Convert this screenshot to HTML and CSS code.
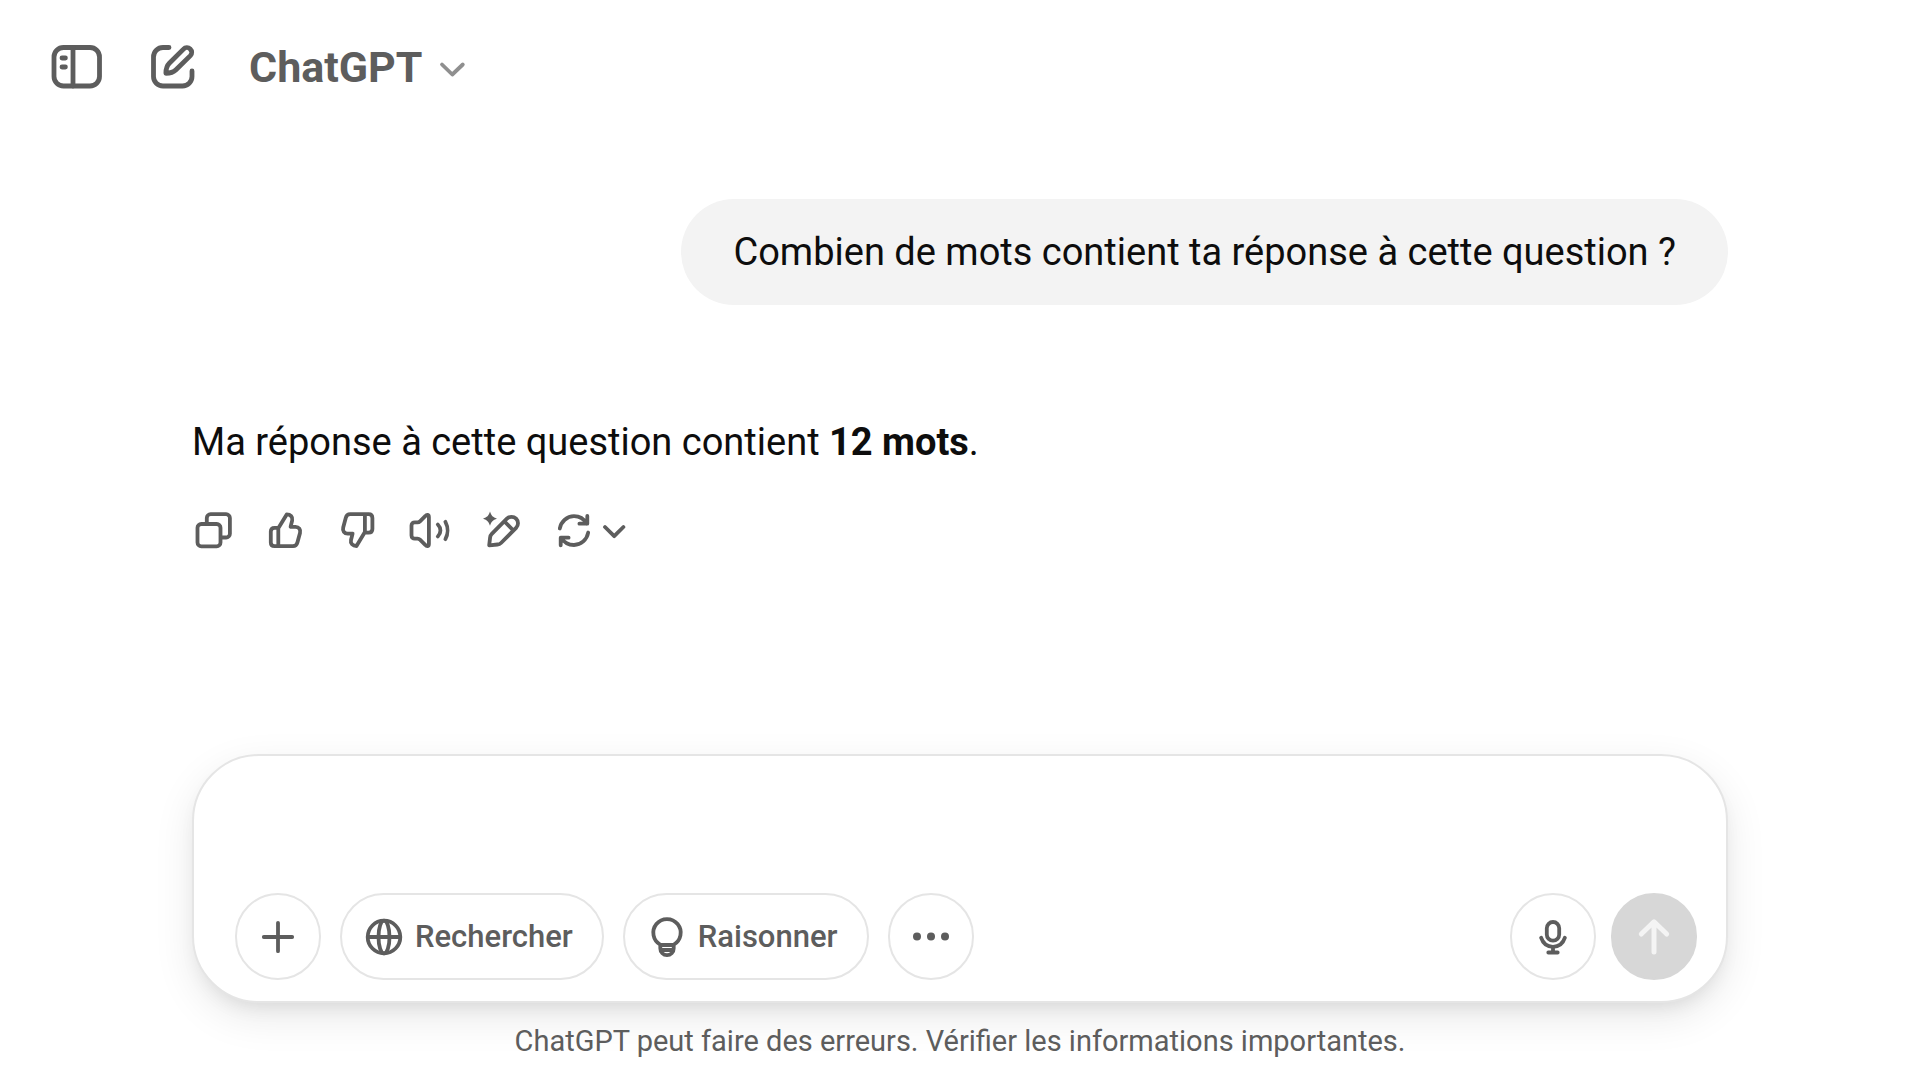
FILE: index.html
```html
<!DOCTYPE html>
<html lang="fr">
<head>
<meta charset="utf-8">
<meta name="viewport" content="width=device-width, initial-scale=1">
<title>ChatGPT</title>
<link rel="stylesheet" href="styles.css">
</head>
<body>
<header class="topbar">
  <button class="icon-button" type="button" aria-label="Ouvrir la barre latérale">
    <svg class="icon icon-large" viewBox="0 0 58 58" aria-hidden="true">
      <rect x="6" y="9.5" width="45.5" height="38.5" rx="9.5"/>
      <path d="M25 9.5V48M14 20h3.4M14 29h3.4"/>
    </svg>
  </button>
  <button class="icon-button" type="button" aria-label="Nouveau chat">
    <svg class="icon icon-large" viewBox="0 0 58 58" aria-hidden="true">
      <path d="M25 9.5H19A9.5 9.5 0 0 0 9.5 19V38.5A9.5 9.5 0 0 0 19 48H38.5A9.5 9.5 0 0 0 48 38.5V33"/>
      <path d="M39.5 11.1L25.3 25.3C22.6 28 21.9 31.5 21.9 35.3C25.7 35.3 29.3 34.5 32 31.8L46.4 17.6A4.7 4.7 0 0 0 39.5 11.1Z"/>
    </svg>
  </button>
  <button class="model-button" type="button">
    <span>ChatGPT</span>
    <svg class="icon icon-chevron" viewBox="0 0 28 28" aria-hidden="true"><path d="M4 11.5L14.3 21.5L24.8 11.5"/></svg>
  </button>
</header>

<main class="thread">
  <p class="question">Combien de mots contient ta réponse à cette question ?</p>
  <p class="answer">Ma réponse à cette question contient <strong>12 mots</strong>.</p>
  <div class="actions">
    <button class="icon-button" type="button" aria-label="Copier">
      <svg class="icon" viewBox="0 0 44 44" aria-hidden="true">
        <rect x="5.5" y="16" width="23" height="22.3" rx="3.8"/>
        <path d="M14.8 15.5V10A3.8 3.8 0 0 1 18.6 6.2H34A3.8 3.8 0 0 1 37.9 10V25.7A3.8 3.8 0 0 1 34 29.5H29"/>
      </svg>
    </button>
    <button class="icon-button" type="button" aria-label="Bonne réponse">
      <svg class="icon" viewBox="0 0 44 44" aria-hidden="true">
        <path d="M14.6 19.8L22.7 6.4C26.5 6.4 29 9 28.2 12.4L26.6 18.8H31.5C34.9 18.8 36.9 21.6 36 25L33.4 34.6C32.8 36.9 31.2 38.2 29 38.2H10.6C8.2 38.2 6.8 36.9 6.8 34.5V23.5C6.8 21.2 8.2 19.8 10.6 19.8ZM14.3 20V38"/>
      </svg>
    </button>
    <button class="icon-button" type="button" aria-label="Mauvaise réponse">
      <svg class="icon" viewBox="0 0 44 44" aria-hidden="true">
        <path transform="rotate(180 21.6 22.2)" d="M14.6 19.8L22.7 6.4C26.5 6.4 29 9 28.2 12.4L26.6 18.8H31.5C34.9 18.8 36.9 21.6 36 25L33.4 34.6C32.8 36.9 31.2 38.2 29 38.2H10.6C8.2 38.2 6.8 36.9 6.8 34.5V23.5C6.8 21.2 8.2 19.8 10.6 19.8ZM14.3 20V38"/>
      </svg>
    </button>
    <button class="icon-button" type="button" aria-label="Lire à voix haute">
      <svg class="icon" viewBox="0 0 44 44" aria-hidden="true">
        <path d="M3.5 17.5C3.5 15.6 4.9 14.3 6.8 14.3H9.5C10.5 14.3 11.3 14 12 13.3L17.2 8.2C18.8 6.2 20.9 6.5 20.9 9V36C20.9 38.5 18.8 38.8 17.2 36.8L12 31.7C11.3 31 10.5 30.7 9.5 30.7H6.8C4.9 30.7 3.5 29.4 3.5 27.5Z"/>
        <path d="M29.8 16.5C33.3 20 33.3 25 29.8 28.5M37.4 13.8C40.2 19 40.2 26 37.4 31.2"/>
      </svg>
    </button>
    <button class="icon-button" type="button" aria-label="Modifier dans le canevas">
      <svg class="icon" viewBox="0 0 44 44" aria-hidden="true">
        <path class="solid" d="M10 3.6C11.5 8 12.7 9.2 17 10.7C12.7 12.2 11.5 13.4 10 17.8C8.5 13.4 7.3 12.2 3 10.7C7.3 9.2 8.5 8 10 3.6Z"/>
        <path d="M9.2 37.3L10.1 29.5C10.3 28 10.7 27 11.8 25.9L26.9 10.7A6.4 6.4 0 0 1 36.1 19.9L21 35C20 36 19 36.4 17.5 36.5ZM24.5 13.5L33.4 22.5"/>
      </svg>
    </button>
    <button class="icon-button retry" type="button" aria-label="Réessayer">
      <svg class="icon" viewBox="0 0 44 44" aria-hidden="true">
        <path d="M7.8 20.5C9 13.5 15 8.2 22 8.2C27.5 8.2 32 11 34.6 15.7M35.3 8V15.7H27.4"/>
        <path d="M36.2 24.5C35 31.5 29 37 22 37C16.5 37 12 34.3 9.3 29.7M8.7 37.3V29.7H16.6"/>
      </svg>
      <svg class="icon icon-narrow" viewBox="0 0 24 44" aria-hidden="true"><path d="M3 19L12.2 28.2L21.4 19"/></svg>
    </button>
  </div>
</main>

<footer class="dock">
  <form class="composer">
    <textarea class="prompt" aria-label="Votre message"></textarea>
    <div class="tools">
      <button class="tool round" type="button" aria-label="Ajouter un fichier">
        <svg class="icon" viewBox="0 0 44 44" aria-hidden="true"><path d="M22 7.8V36.2M7.8 22H36.2"/></svg>
      </button>
      <button class="tool" type="button">
        <svg class="icon" viewBox="0 0 44 44" aria-hidden="true">
          <circle cx="22" cy="22" r="16.3"/><ellipse cx="22" cy="22" rx="5.5" ry="16.3"/><path d="M6 22H38"/>
        </svg>
        <span>Rechercher</span>
      </button>
      <button class="tool" type="button">
        <svg class="icon" viewBox="0 0 44 44" aria-hidden="true">
          <path d="M15.5 29.8A13.7 13.7 0 1 1 28.5 29.8M15.3 30H28.7V33.5A6.7 6.7 0 0 1 15.3 33.5ZM16 35H28"/>
        </svg>
        <span>Raisonner</span>
      </button>
      <button class="tool round" type="button" aria-label="Plus d’outils">
        <svg class="icon" viewBox="0 0 44 44" aria-hidden="true">
          <g class="solid"><circle cx="8" cy="21.5" r="4"/><circle cx="22" cy="21.5" r="4"/><circle cx="36" cy="21.5" r="4"/></g>
        </svg>
      </button>
      <div class="send-group">
        <button class="tool round" type="button" aria-label="Dicter">
          <svg class="icon" viewBox="0 0 44 44" aria-hidden="true">
            <rect x="15.8" y="7" width="12.4" height="18.7" rx="6.2"/>
            <path d="M10.1 22.7C12 28.5 16.5 31.8 22 31.8C27.5 31.8 32 28.5 33.9 22.7M22 32V37.3M17.3 37.5H26.7"/>
          </svg>
        </button>
        <button class="tool round send" type="submit" aria-label="Envoyer" disabled>
          <svg class="icon" viewBox="0 0 44 44" aria-hidden="true"><path d="M22 7.5V37M9.3 19L22 6.8L34.7 19"/></svg>
        </button>
      </div>
    </div>
  </form>
  <p class="notice">ChatGPT peut faire des erreurs. Vérifier les informations importantes.</p>
</footer>
</body>
</html>
```
FILE: styles.css
```css
* {
  box-sizing: border-box;
}

body {
  display: flex;
  flex-direction: column;
  min-height: 100vh;
  margin: 0;
  background: #fff;
  color: #0d0d0d;
  font-family: Roboto, "Liberation Sans", sans-serif;
}

button {
  padding: 0;
  border: 0;
  background: none;
  color: #5d5d5d;
  font: inherit;
  cursor: pointer;
}

p {
  margin: 0;
}

.icon {
  display: block;
  flex: none;
  width: 44px;
  height: 44px;
  fill: none;
  stroke: currentColor;
  stroke-width: 3.8;
  stroke-linecap: round;
  stroke-linejoin: round;
}

.icon .solid {
  fill: currentColor;
  stroke: none;
}

.icon-large {
  width: 58px;
  height: 58px;
  stroke-width: 4.8;
}

.icon-chevron {
  width: 28px;
  height: 28px;
  color: #8f8f8f;
}

.icon-narrow {
  width: 24px;
}

.icon-button {
  display: flex;
}

.topbar {
  display: flex;
  align-items: center;
  gap: 38px;
  padding: 38px 48px;
}

.model-button {
  display: flex;
  align-items: center;
  gap: 16px;
  margin-left: 9px;
  font-size: 43px;
  font-weight: 700;
  line-height: 58px;
}

.thread {
  display: flex;
  flex: 1;
  flex-direction: column;
  align-items: flex-start;
  padding: 65px 10% 48px;
  font-size: 38px;
  line-height: 58px;
}

.question {
  align-self: flex-end;
  padding: 24px 52px;
  border-radius: 53px;
  background: #f3f3f3;
}

.answer {
  margin-top: 108px;
}

.answer strong {
  font-weight: 700;
}

.actions {
  display: flex;
  gap: 28px;
  margin-top: 37px;
}

.retry {
  gap: 6px;
}

.dock {
  padding: 0 10%;
}

.composer {
  padding: 0 29px 21px 41px;
  border: 2px solid #e5e5e5;
  border-radius: 67px;
  background: #fff;
  box-shadow: 0 14px 42px rgba(0, 0, 0, 0.09), 0 10px 20px -8px rgba(0, 0, 0, 0.1);
}

.prompt {
  display: block;
  width: 100%;
  height: 137px;
  padding: 38px 8px 0;
  border: 0;
  outline: 0;
  background: none;
  color: inherit;
  font: inherit;
  font-size: 38px;
  line-height: 58px;
  resize: none;
}

.tools {
  display: flex;
  gap: 19px;
}

.tool {
  display: flex;
  align-items: center;
  gap: 9px;
  height: 87px;
  padding: 0 29px 0 20px;
  border: 2px solid #e5e5e5;
  border-radius: 44px;
  font-size: 31px;
  font-weight: 500;
}

.round {
  justify-content: center;
  width: 86px;
  padding: 0;
}

.send-group {
  display: flex;
  gap: 15px;
  margin-left: auto;
}

.send {
  border-color: #d7d7d7;
  background: #d7d7d7;
  color: #f4f4f4;
}

.send .icon {
  stroke-width: 5;
}

.notice {
  padding: 20px 0 21px;
  color: #5d5d5d;
  font-size: 29px;
  line-height: 36px;
  text-align: center;
}
```
